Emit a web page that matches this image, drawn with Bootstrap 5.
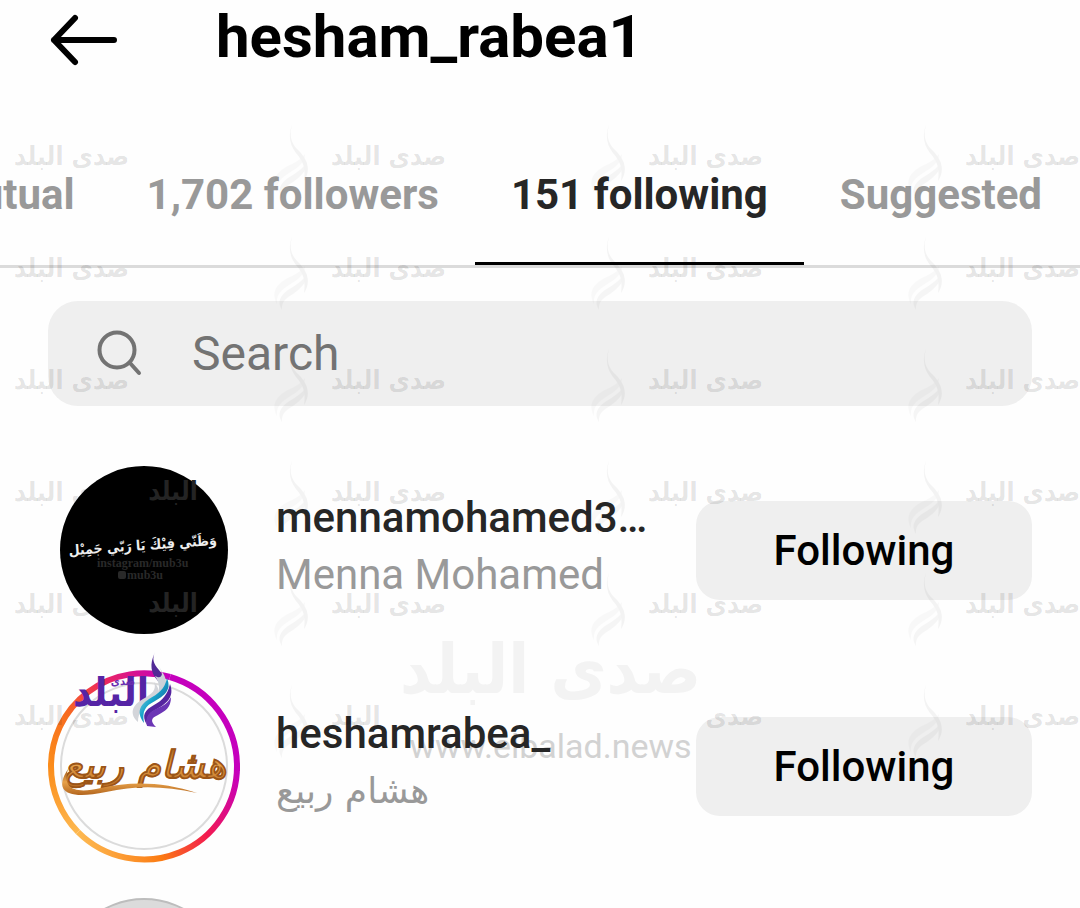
<!DOCTYPE html>
<html lang="en">
<head>
<meta charset="utf-8">
<meta name="viewport" content="width=device-width, initial-scale=1">
<title>hesham_rabea1</title>
<link href="https://cdn.jsdelivr.net/npm/bootstrap@5.3.0/dist/css/bootstrap.min.css" rel="stylesheet">
<style>
  body { font-family: Roboto, "DejaVu Sans", sans-serif; background: #fefefe; color: #262626; }
  .screen { height: 100vh; }
  .topbar { padding: 0 48px; height: 96px; gap: 96px; }
  .topbar h1 { font-size: 60px; line-height: 74px; font-weight: 700; color: #000; }
  .icon-btn { width: 72px; height: 72px; }
  .tabs { height: 172px; border-bottom: 3px solid #dbdbdb; padding-right: 2px; }
  .tabs a { font-size: 42px; line-height: 48px; font-weight: 700; color: #999; padding: 75px 36px 0; white-space: nowrap; }
  .tabs a.active { color: #262626; border-bottom: 3px solid #000; }
  .search-box { margin: 33px 48px 36px; height: 105px; border-radius: 30px; background: #efefef; padding: 0 48px; gap: 48px; }
  .search-box input { font-size: 48px; line-height: 56px; outline: 0; color: #262626; min-width: 0; }
  .search-box input::placeholder { color: #737373; opacity: 1; }
  .person { height: 216px; padding: 0 48px; }
  .avatar { width: 192px; height: 192px; margin-right: 36px; }
  .who { min-width: 0; font-size: 42px; line-height: 57px; margin-right: 42px; padding-bottom: 8px; }
  .who a { color: #262626; font-weight: 500; }
  .who .fullname { color: #999; }
  .who .ar { font-size: 36px; }
  .btn-follow { width: 336px; height: 99px; border-radius: 24px; background: #efefef; font-size: 42px; font-weight: 500; color: #000; }
  .marks { top: 120px; left: 0; pointer-events: none; }
  .marks-row { height: 112px; }
  .stamp { width: 317px; height: 112px; padding: 12px 8px 0 14px; color: rgba(0,0,0,.11); font: 700 26px/48px "DejaVu Sans Condensed", "DejaVu Sans", sans-serif; }
  .stamp span { width: 115px; white-space: nowrap; }
  .stamp svg { margin-top: -8px; }
  .big-mark { top: 618px; left: 400px; color: #f3f3f3; pointer-events: none; z-index: -1; white-space: nowrap; }
  .big-mark .word { font: 700 68px/104px "DejaVu Sans Condensed", "DejaVu Sans", sans-serif; }
  .big-mark .site { font: 400 34px/48px Roboto, sans-serif; color: #d2d2d2; }
  .ar { font-family: "DejaVu Sans", sans-serif; }
  .ar-narrow { font-family: "DejaVu Sans Condensed", "DejaVu Sans", sans-serif; font-weight: 700; }
</style>
</head>
<body>
<svg width="0" height="0" class="position-absolute" aria-hidden="true">
  <defs>
    <symbol id="flame" viewBox="0 0 36 76">
      <path d="M19 1c-3 11-1 18 6 25 10 10 13 20 6 31 2-13-1-20-8-28-6-8-8-17-4-28z"/>
      <path d="M32 30c0 9-8 14-16 19C8 54 3 59 4 68c-6-11-1-19 9-25 8-4 15-7 19-13z" opacity=".5"/>
      <path d="M34 38c0 9-7 15-14 20-7 4-12 8-11 16-5-8-2-14 6-20 8-5 15-9 19-16z" opacity=".8"/>
    </symbol>
  </defs>
</svg>

<main class="screen position-relative overflow-hidden">
  <header class="topbar d-flex align-items-start">
    <button class="icon-btn btn p-0 border-0 flex-shrink-0" aria-label="Back">
      <svg class="d-block" width="72" height="80" viewBox="0 0 72 80" fill="none" stroke="#000" stroke-width="6" stroke-linecap="round" stroke-linejoin="round"><path d="M66 40H6M27 18 6 40l21 22"/></svg>
    </button>
    <h1 class="m-0">hesham_rabea1</h1>
  </header>

  <nav class="tabs d-flex justify-content-end" aria-label="Lists">
    <a class="text-decoration-none" href="#mutual">Mutual</a>
    <a class="text-decoration-none" href="#followers">1,702 followers</a>
    <a class="text-decoration-none active" href="#following" aria-current="page">151 following</a>
    <a class="text-decoration-none" href="#suggested">Suggested</a>
  </nav>

  <label class="search-box d-flex align-items-center">
    <svg class="flex-shrink-0" width="48" height="48" viewBox="0 0 48 48" fill="none" stroke="#737373" stroke-width="4" stroke-linecap="round"><circle cx="21" cy="20" r="17.500"/><path d="m34 33 9 10"/></svg>
    <input class="flex-grow-1 border-0 bg-transparent p-0" type="text" placeholder="Search" aria-label="Search">
  </label>

  <ul class="list-unstyled m-0">
    <li class="person d-flex align-items-center">
      <svg class="avatar flex-shrink-0" viewBox="0 0 192 192" role="img" aria-label="Menna Mohamed">
        <circle cx="96" cy="96" r="84" fill="#000"/>
        <g class="ar-narrow" text-anchor="middle">
          <text x="125" y="46" font-size="26" fill="#242424">البلد</text>
          <text x="125" y="158" font-size="26" fill="#242424">البلد</text>
          <text x="95" y="96" font-size="14" fill="#eee" transform="rotate(-4 95 96)">وَظَنّي فِيْكَ يَا رَبّي جَمِيْل</text>
        </g>
        <g font-family="Liberation Serif, serif" font-weight="700" font-size="12" fill="#292929"><text x="49" y="113">instagram/mub3u</text><text x="79" y="125">mub3u</text></g>
        <rect x="70" y="117" width="8" height="8" rx="2" fill="#292929"/>
      </svg>
      <div class="who flex-grow-1">
        <a class="d-block text-truncate text-decoration-none" href="#menna">mennamohamed3012</a>
        <div class="fullname text-truncate">Menna Mohamed</div>
      </div>
      <button class="btn-follow btn border-0 flex-shrink-0">Following</button>
    </li>

    <li class="person d-flex align-items-center">
      <svg class="avatar flex-shrink-0 overflow-visible" viewBox="0 0 192 192" role="img" aria-label="هشام ربيع">
        <defs>
          <linearGradient id="bronze" x1="0" y1="0" x2="0" y2="1"><stop offset="0" stop-color="#9a5518"/><stop offset=".5" stop-color="#e8a24a"/><stop offset="1" stop-color="#b3661f"/></linearGradient>
          <linearGradient id="sea" x1="0" y1="0" x2="1" y2="1"><stop offset="0" stop-color="#d4dce4"/><stop offset=".45" stop-color="#17a5cb"/><stop offset="1" stop-color="#18367e"/></linearGradient>
          <linearGradient id="ringTop" gradientUnits="userSpaceOnUse" x1="3" y1="96" x2="122" y2="7"><stop offset="0" stop-color="#fb8c1a"/><stop offset=".3" stop-color="#f76a20"/><stop offset=".6" stop-color="#ee2a58"/><stop offset="1" stop-color="#c500bd"/></linearGradient>
          <linearGradient id="ringLow" gradientUnits="userSpaceOnUse" x1="30" y1="162" x2="189" y2="100"><stop offset="0" stop-color="#fdb850"/><stop offset=".4" stop-color="#fb7a12"/><stop offset=".7" stop-color="#f31a50"/><stop offset="1" stop-color="#c500bd"/></linearGradient>
          <linearGradient id="ringLeft" gradientUnits="userSpaceOnUse" x1="3" y1="96" x2="30" y2="162"><stop offset="0" stop-color="#fb8c1a"/><stop offset="1" stop-color="#fdb850"/></linearGradient>
        </defs>
        <circle cx="96" cy="96" r="83" fill="#fefefe" stroke="#dbdbdb" stroke-width="2"/>
        <g fill="none" stroke-width="6">
          <path d="M122 7A93 93 0 0 1 189 96v5" stroke="#c500bd"/>
          <path d="M3 96A93 93 0 0 1 122 7" stroke="url(#ringTop)"/>
          <path d="M189 96A93 93 0 0 1 30 162" stroke="url(#ringLow)"/>
          <path d="M30 162A93 93 0 0 1 3 96" stroke="url(#ringLeft)"/>
        </g>
        <text class="ar" x="97" y="108" text-anchor="middle" font-size="38" font-weight="700" font-style="italic" fill="url(#bronze)" stroke="#9b5518" stroke-width=".6">هشام ربيع</text>
        <path d="M20 99c-6 20 7 25 33 19 31-7 63-6 96 5-32-7-60-8-91-1-38 8-53 0-38-23z" fill="url(#bronze)"/>
        <text class="ar-narrow" x="63" y="36" text-anchor="middle" font-size="40" fill="#5524a5">البلد</text>
        <text class="ar-narrow" x="75" y="15" text-anchor="middle" font-size="11" fill="#6a2fb0">صدى</text>
        <g>
          <path d="M107-18c-6 13-4 21 3 29 3 4 5 6 4 9 4-8 2-13-3-20-6-7-7-11-4-18z" fill="#512a96"/>
          <path d="M109-10c2 10 8 13 9 21 1 7-3 12-8 15 2-9 1-14-3-20 4 2 6 2 7-2-1-5-4-8-5-14z" fill="#cbd1d8"/>
          <path d="M106 12c3 8-2 12-11 17-11 6-14 15-5 23 0-10 5-15 13-19 9-5 11-12 3-21z" fill="#d3d5da"/>
          <path d="M119 8c5 12-3 18-12 23-10 5-13 10-11 22-8-11-4-18 5-24 9-5 16-10 18-21z" fill="url(#sea)"/>
          <path d="M122 14c5 13-4 20-13 25-8 4-11 8-10 16-6-10-2-15 7-20 8-4 14-11 16-21z" fill="#55249f"/>
          <path d="M123 27c0 11-6 14-13 18-7 3-8 6-2 12l-9-1c-2-9 1-13 9-17 7-3 12-6 15-12z" fill="#6b35b5"/>
        </g>
      </svg>
      <div class="who flex-grow-1">
        <a class="d-block text-truncate text-decoration-none" href="#heshamrabea">heshamrabea_</a>
        <div class="fullname text-truncate ar" lang="ar">هشام ربيع</div>
      </div>
      <button class="btn-follow btn border-0 flex-shrink-0">Following</button>
    </li>

    <li class="person d-flex align-items-center">
      <svg class="avatar flex-shrink-0" viewBox="0 0 192 192" aria-hidden="true"><circle cx="96" cy="96" r="83" fill="#dbdbdb" stroke="#bdbdbd" stroke-width="2"/></svg>
    </li>
  </ul>

  <div class="big-mark position-absolute text-center" aria-hidden="true">
    <div class="word" lang="ar">صدى البلد</div>
    <div class="site">www.elbalad.news</div>
  </div>
  <div class="marks position-absolute w-100 overflow-hidden" id="marks" aria-hidden="true"></div>
</main>

<template id="stamp">
  <div class="stamp d-flex flex-shrink-0 justify-content-between align-items-start">
    <span lang="ar"><i class="fst-normal first">صدى</i> <i class="fst-normal second">البلد</i></span>
    <svg width="36" height="76" fill="#000" opacity=".04"><use href="#flame"/></svg>
  </div>
</template>
<script>
  // Tile the agency stamp over the screen; parts behind the large mark stay hidden.
  const marks = document.getElementById('marks');
  const stamp = document.getElementById('stamp');
  const hidden = { '5-1': ['.first', 'svg'], '5-2': ['.second'] };
  for (let r = 0; r < 6; r++) {
    const row = document.createElement('div');
    row.className = 'marks-row d-flex';
    for (let c = 0; c < 4; c++) {
      const node = stamp.content.cloneNode(true);
      (hidden[r + '-' + c] || []).forEach(s => node.querySelector(s).classList.add('invisible'));
      row.appendChild(node);
    }
    marks.appendChild(row);
  }
</script>
<script src="https://cdn.jsdelivr.net/npm/bootstrap@5.3.0/dist/js/bootstrap.bundle.min.js"></script>
</body>
</html>
